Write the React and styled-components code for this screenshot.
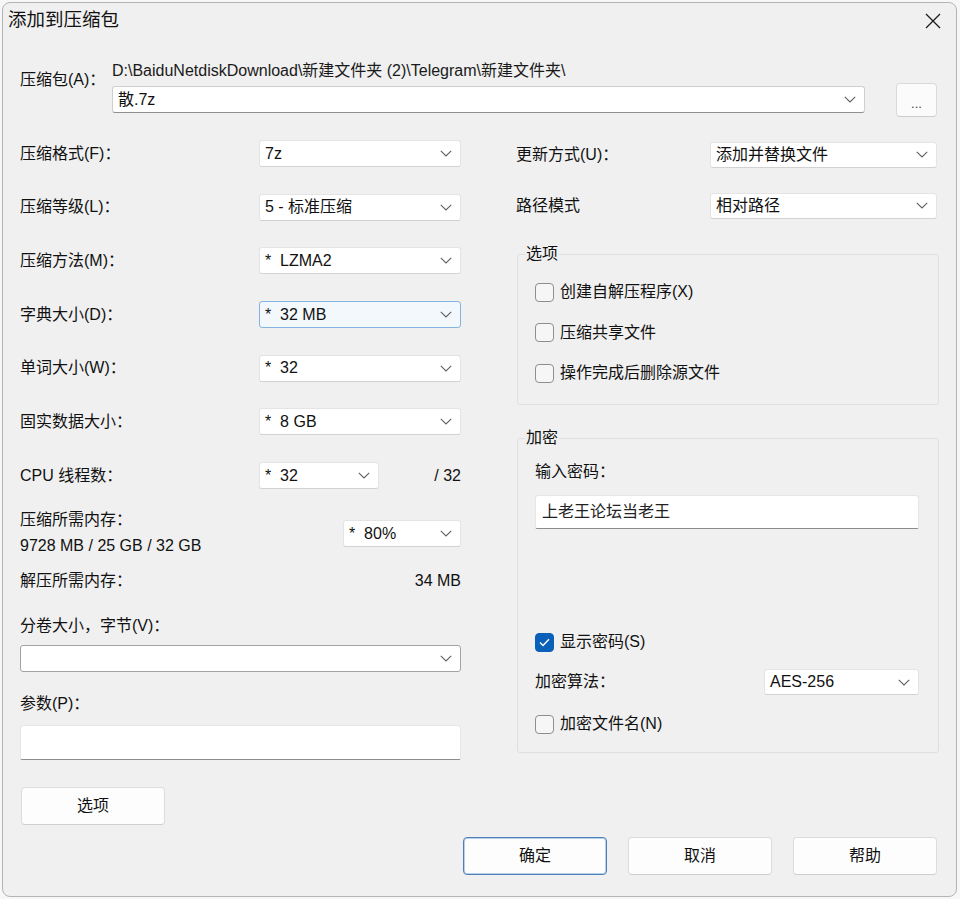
import React from "react";
import styled, { createGlobalStyle, css } from "styled-components";

const GlobalStyle = createGlobalStyle`
  html, body { margin: 0; padding: 0; background: #f7f7f7; }
  body {
    font-family: "Liberation Sans", "Noto Sans CJK SC", sans-serif;
    font-size: 16px;
    line-height: 20px;
    color: #111;
  }
  * { box-sizing: border-box; }
`;

const Page = styled.div`
  padding: 2px 3px 3px 2px;
`;

const Window = styled.div`
  height: 895px;
  background: #f0f0f0;
  border: 1px solid #b4b4b4;
  border-radius: 8px;
  display: flex;
  flex-direction: column;
  overflow: hidden;
`;

const TitleBar = styled.div`
  height: 37px;
  display: flex;
  align-items: flex-start;
  justify-content: space-between;
`;

const Title = styled.div`
  font-size: 18.5px;
  line-height: 24px;
  padding: 5px 0 0 5px;
  color: #111;
`;

const CloseButton = styled.div`
  width: 46px;
  height: 35px;
  display: flex;
  align-items: center;
  justify-content: center;
`;

const Content = styled.div`
  padding: 0 17px 0 17px;
  display: flex;
  flex-direction: column;
`;

const ArchiveRow = styled.div`
  margin-top: 21px;
  display: grid;
  grid-template-columns: 92px 753px 31px 41px;
  align-items: start;
`;

const ArchiveLabel = styled.div`
  margin-top: 9px;
  white-space: nowrap;
`;

const PathBlock = styled.div`
  display: flex;
  flex-direction: column;
  gap: 5px;
`;

const PathText = styled.div`
  white-space: nowrap;
  color: #1a1a1a;
`;

const BrowseButton = styled.div`
  grid-column: 4;
  margin-top: 22px;
  height: 34px;
  background: #fbfbfb;
  border: 1px solid #dadada;
  border-bottom-color: #cdcdcd;
  border-radius: 4px;
  display: flex;
  align-items: center;
  justify-content: center;
  font-size: 13px;
  padding-top: 8px;
  color: #444;
`;

const Main = styled.div`
  margin-top: 23px;
  display: grid;
  grid-template-columns: 441px 1fr;
  column-gap: 55px;
  align-items: start;
`;

const Column = styled.div`
  display: flex;
  flex-direction: column;
`;

const StackedRows = styled.div`
  display: flex;
  flex-direction: column;
  gap: ${(p) => p.$gap}px;
  margin-top: ${(p) => p.$top || 0}px;
`;

const FieldRow = styled.div`
  display: grid;
  grid-template-columns: ${(p) => p.$labelWidth}px ${(p) => p.$fieldWidth}px 1fr;
  align-items: center;
  height: 27px;
  margin-top: ${(p) => p.$top || 0}px;
`;

const Label = styled.div`
  white-space: nowrap;
  margin-top: ${(p) => p.$top || 0}px;
`;

const Value = styled.div`
  text-align: right;
  white-space: nowrap;
`;

const ComboBox = styled.div`
  height: ${(p) => p.$height || 27}px;
  width: ${(p) => (p.$width ? `${p.$width}px` : "100%")};
  margin-top: ${(p) => p.$top || 0}px;
  display: flex;
  align-items: center;
  justify-content: space-between;
  padding: 0 8px 0 5px;
  background: #ffffff;
  border: 1px solid #e4e4e4;
  border-bottom-color: #d2d2d2;
  border-radius: 3px;
  white-space: pre;
  ${(p) =>
    p.$focused &&
    css`
      background: #f3f8fd;
      border-color: #86b4e2;
    `}
  ${(p) =>
    p.$editable &&
    css`
      border-color: #cfcfcf;
      border-bottom-color: #8f8f8f;
    `}
  ${(p) =>
    p.$framed &&
    css`
      border-color: #a3a3a3;
    `}
`;

const TextInput = styled.div`
  height: ${(p) => p.$height}px;
  margin-top: ${(p) => p.$top || 0}px;
  background: #ffffff;
  border: 1px solid #e6e6e6;
  border-bottom: 1px solid #8c8c8c;
  border-radius: 3px 3px 2px 2px;
  padding: 0 6px;
  display: flex;
  align-items: center;
  color: #222;
  white-space: nowrap;
`;

const MemoryBlock = styled.div`
  margin-top: 21px;
  display: grid;
  grid-template-columns: 1fr 118px;
  align-items: start;
`;

const MemoryText = styled.div`
  display: flex;
  flex-direction: column;
  gap: 6px;
  white-space: nowrap;
`;

const SplitRow = styled.div`
  margin-top: 15px;
  display: flex;
  justify-content: space-between;
  height: 20px;
`;

const Button = styled.div`
  width: 144px;
  height: 38px;
  margin-top: ${(p) => p.$top || 0}px;
  margin-left: ${(p) => p.$left || 0}px;
  background: #fdfdfd;
  border: 1px solid #dcdcdc;
  border-bottom-color: #cfcfcf;
  border-radius: 4px;
  display: flex;
  align-items: center;
  justify-content: center;
  color: #111;
  ${(p) =>
    p.$primary &&
    css`
      border: 1px solid #4f7fb9;
      box-shadow: inset 0 0 0 1px #b6cfea;
    `}
`;

const Group = styled.fieldset`
  margin: ${(p) => p.$top}px 0 0 1px;
  padding: ${(p) => p.$padTop}px 19px ${(p) => p.$padBottom}px 17px;
  border: 1px solid #dfdfdf;
  border-radius: 3px;
  min-width: 0;
  display: flex;
  flex-direction: column;
`;

const Legend = styled.legend`
  padding: 0 1px;
  margin-left: -10px;
  line-height: 20px;
`;

const CheckRow = styled.label`
  display: flex;
  align-items: center;
  gap: 6px;
  height: 20px;
  margin-top: ${(p) => p.$top || 0}px;
  white-space: nowrap;
`;

const Box = styled.span`
  width: 19px;
  height: 19px;
  border-radius: 4px;
  border: 1px solid #8e8e8e;
  background: #f6f6f6;
  display: inline-flex;
  align-items: center;
  justify-content: center;
  flex: none;
  ${(p) =>
    p.$checked &&
    css`
      background: #0a5fb8;
      border-color: #0a5fb8;
    `}
`;

const AlgoRow = styled.div`
  margin-top: 17px;
  display: grid;
  grid-template-columns: 1fr 155px;
  align-items: center;
`;

const Footer = styled.div`
  margin-top: 12px;
  padding-right: 2px;
  display: flex;
  justify-content: flex-end;
  gap: 21px;
`;

const Chevron = () => (
  <svg width="12" height="7" viewBox="0 0 12 7" fill="none">
    <path d="M0.8 0.8 L6 6 L11.2 0.8" stroke="#606060" strokeWidth="1.1" />
  </svg>
);

const CloseIcon = () => (
  <svg width="16" height="16" viewBox="0 0 16 16" fill="none">
    <path d="M1 1 L15 15 M15 1 L1 15" stroke="#1b1b1b" strokeWidth="1.3" />
  </svg>
);

const CheckMark = () => (
  <svg width="11" height="9" viewBox="0 0 11 9" fill="none">
    <path d="M1 4.6 L4 7.5 L10 1.2" stroke="#ffffff" strokeWidth="1.4" />
  </svg>
);

const Combo = ({ children, ...rest }) => (
  <ComboBox {...rest}>
    <span>{children}</span>
    <Chevron />
  </ComboBox>
);

const Check = ({ checked, children, top }) => (
  <CheckRow $top={top}>
    <Box $checked={checked}>{checked && <CheckMark />}</Box>
    <span>{children}</span>
  </CheckRow>
);

const settings = [
  { label: "压缩格式(F)：", value: "7z" },
  { label: "压缩等级(L)：", value: "5 - 标准压缩" },
  { label: "压缩方法(M)：", value: "*  LZMA2" },
  { label: "字典大小(D)：", value: "*  32 MB", focused: true },
  { label: "单词大小(W)：", value: "*  32" },
  { label: "固实数据大小：", value: "*  8 GB" },
];

export default function App() {
  return (
    <Page>
      <GlobalStyle />
      <Window>
        <TitleBar>
          <Title>添加到压缩包</Title>
          <CloseButton>
            <CloseIcon />
          </CloseButton>
        </TitleBar>
        <Content>
          <ArchiveRow>
            <ArchiveLabel>压缩包(A)：</ArchiveLabel>
            <PathBlock>
              <PathText>D:\BaiduNetdiskDownload\新建文件夹 (2)\Telegram\新建文件夹\</PathText>
              <Combo $editable>散.7z</Combo>
            </PathBlock>
            <BrowseButton>...</BrowseButton>
          </ArchiveRow>

          <Main>
            <Column>
              <StackedRows $gap={26.7}>
                {settings.map((s) => (
                  <FieldRow key={s.label} $labelWidth={239} $fieldWidth={202}>
                    <Label>{s.label}</Label>
                    <Combo $focused={s.focused}>{s.value}</Combo>
                  </FieldRow>
                ))}
                <FieldRow $labelWidth={239} $fieldWidth={120}>
                  <Label>CPU 线程数：</Label>
                  <Combo>*  32</Combo>
                  <Value>/ 32</Value>
                </FieldRow>
              </StackedRows>

              <MemoryBlock>
                <MemoryText>
                  <span>压缩所需内存：</span>
                  <span>9728 MB / 25 GB / 32 GB</span>
                </MemoryText>
                <Combo $top={10}>*  80%</Combo>
              </MemoryBlock>

              <SplitRow>
                <span>解压所需内存：</span>
                <Value>34 MB</Value>
              </SplitRow>

              <Label $top={25}>分卷大小，字节(V)：</Label>
              <Combo $top={9} $framed> </Combo>

              <Label $top={22}>参数(P)：</Label>
              <TextInput $top={11} $height={35} />

              <Button $top={27} $left={1}>选项</Button>
            </Column>

            <Column>
              <FieldRow $labelWidth={194} $fieldWidth={227} $top={1}>
                <Label>更新方式(U)：</Label>
                <Combo $height={26}>添加并替换文件</Combo>
              </FieldRow>
              <FieldRow $labelWidth={194} $fieldWidth={227} $top={24}>
                <Label>路径模式</Label>
                <Combo $height={26}>相对路径</Combo>
              </FieldRow>

              <Group $top={25} $padTop={18} $padBottom={21}>
                <Legend>选项</Legend>
                <Check>创建自解压程序(X)</Check>
                <Check top={20.5}>压缩共享文件</Check>
                <Check top={20.5}>操作完成后删除源文件</Check>
              </Group>

              <Group $top={23} $padTop={14} $padBottom={18}>
                <Legend>加密</Legend>
                <Label>输入密码：</Label>
                <TextInput $top={13} $height={34}>上老王论坛当老王</TextInput>
                <CheckRow $top={103}>
                  <Box $checked>
                    <CheckMark />
                  </Box>
                  <span>显示密码(S)</span>
                </CheckRow>
                <AlgoRow>
                  <Label>加密算法：</Label>
                  <Combo $height={26}>AES-256</Combo>
                </AlgoRow>
                <Check top={19}>加密文件名(N)</Check>
              </Group>
            </Column>
          </Main>

          <Footer>
            <Button $primary>确定</Button>
            <Button>取消</Button>
            <Button>帮助</Button>
          </Footer>
        </Content>
      </Window>
    </Page>
  );
}
